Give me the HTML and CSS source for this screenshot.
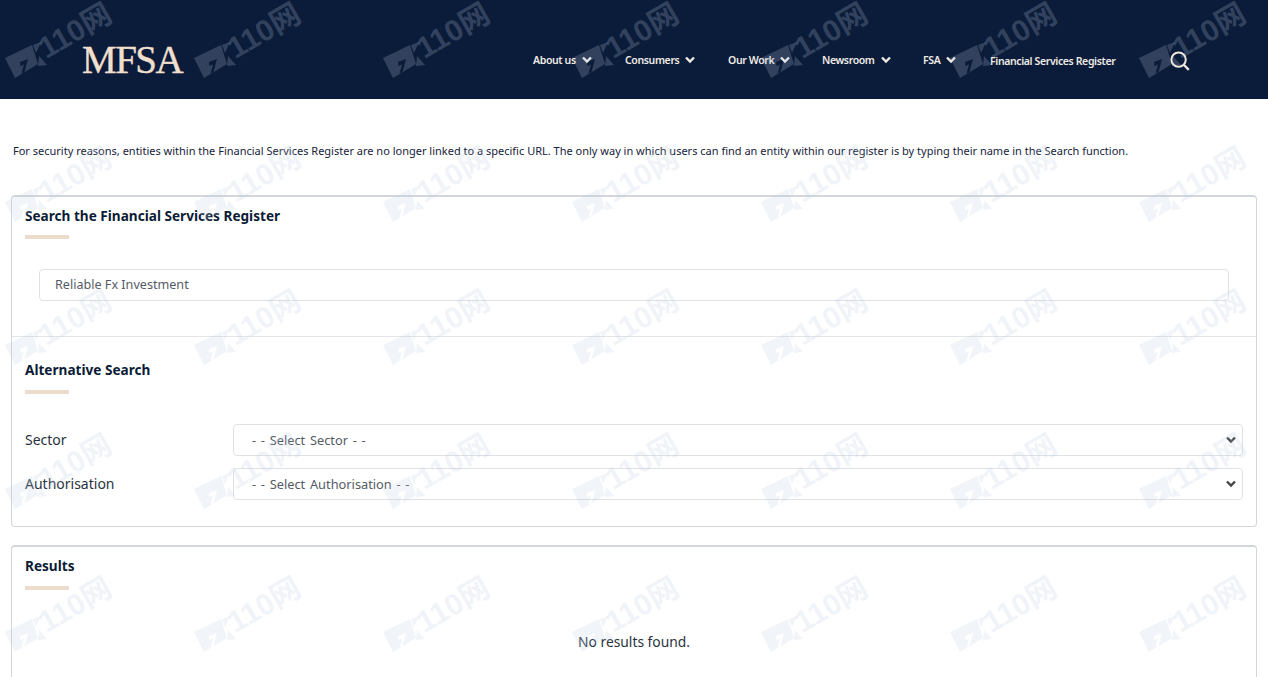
FILE: index.html
```html
<!DOCTYPE html>
<html lang="en">
<head>
<meta charset="utf-8">
<title>Financial Services Register</title>
<link rel="stylesheet" href="styles.css">
</head>
<body>
<svg class="defs" width="0" height="0" aria-hidden="true">
  <symbol id="chev" viewBox="0 0 10 8"><path d="M1 1.5 5 5.5 9 1.5" fill="none" stroke="currentColor" stroke-width="2.4"/></symbol>
</svg>
<header class="topbar">
  <div class="logo">MFSA</div>
  <nav class="nav">
    <a class="nav-item about">About us <svg class="chev"><use href="#chev"/></svg></a>
    <a class="nav-item consumers">Consumers <svg class="chev"><use href="#chev"/></svg></a>
    <a class="nav-item work">Our Work <svg class="chev"><use href="#chev"/></svg></a>
    <a class="nav-item news">Newsroom <svg class="chev"><use href="#chev"/></svg></a>
    <a class="nav-item fsa">FSA <svg class="chev"><use href="#chev"/></svg></a>
    <a class="nav-item register">Financial Services Register</a>
    <svg class="search" viewBox="0 0 20 20"><circle cx="8.6" cy="8.6" r="7.2" fill="none" stroke="currentColor" stroke-width="2"/><path d="M14 14 18.8 18.8" stroke="currentColor" stroke-width="2.4" fill="none"/></svg>
  </nav>
</header>
<main class="content">
  <p class="notice">For security reasons, entities within the Financial Services Register are no longer linked to a specific URL. The only way in which users can find an entity within our register is by typing their name in the Search function.</p>
  <section class="card">
    <div class="card-part first">
      <h2 class="title">Search the Financial Services Register</h2>
      <div class="rule"></div>
      <div class="input name-input">Reliable Fx Investment</div>
    </div>
    <div class="card-part second">
      <h2 class="title">Alternative Search</h2>
      <div class="rule"></div>
      <div class="field">
        <span class="label">Sector</span>
        <div class="input select">- - Select Sector - -<svg class="select-chev"><use href="#chev"/></svg></div>
      </div>
      <div class="field">
        <span class="label">Authorisation</span>
        <div class="input select">- - Select Authorisation - -<svg class="select-chev"><use href="#chev"/></svg></div>
      </div>
    </div>
  </section>
  <section class="card results">
    <h2 class="title">Results</h2>
    <div class="rule"></div>
    <p class="empty">No results found.</p>
  </section>
</main>
<div class="marks" id="marks"></div>
<script src="marks.js"></script>
</body>
</html>
```
FILE: marks.js
```js
var host = document.getElementById('marks');
var html = '';
for (var i = 0; i < 35; i++) {
  html += '<div class="mark"><svg class="mark-logo" viewBox="0 0 50 40"><path d="M5 18 32 5 38 24 15 38Z M20 22 28 19 24.5 32 21.5 33.5 24 24.5 20.5 26Z M33 5 41 2 36 13Z M39 16 47 25 38 26Z" fill="currentColor" fill-rule="evenodd"/></svg><span class="mark-text">110网</span></div>';
}
host.innerHTML = html;
```
FILE: styles.css
```css
* { box-sizing: border-box; }
html, body { margin: 0; padding: 0; }
body {
  position: relative;
  width: 1268px;
  height: 677px;
  overflow: hidden;
  background: #fff;
  color: #0b1c36;
  font-family: "Noto Sans", "Open Sans", sans-serif;
}
.defs { position: absolute; }
.topbar {
  height: 99px;
  background: #0b1c3a;
  display: flex;
  align-items: center;
  padding: 21px 0 0 82px;
}
.logo {
  font-family: "Liberation Serif", serif;
  font-size: 39px;
  line-height: 40px;
  color: #f0dfcd;
  width: 451px;
  letter-spacing: -1.5px;
  -webkit-text-stroke: 0.4px #f0dfcd;
}
.nav { display: flex; align-items: center; color: #efeae4; font-size: 10.5px; font-weight: 600; letter-spacing: -0.37px; }
.nav-item { display: flex; align-items: center; white-space: nowrap; }
.chev { width: 10px; height: 8px; margin-left: 6px; }
.about { width: 92px; }
.consumers { width: 103px; }
.work { width: 94px; }
.news { width: 101px; }
.fsa { width: 67px; }
.register { width: 180px; position: relative; top: 1px; }
.search { width: 20px; height: 20px; color: #f0e6da; position: relative; top: 1px; }
.content { padding: 0 11px; }
.notice { margin: 44px 0 37px 2px; font-size: 11px; line-height: 15px; color: #16233a; white-space: nowrap; }
.card {
  border: 1px solid #d3d6da;
  border-top-width: 2px;
  border-radius: 4px;
}
.first { padding: 10px 13px 35px; border-bottom: 1px solid #e3e5e8; }
.second { padding: 24px 13px 26px; }
.title { margin: 0; font-size: 13.6px; line-height: 18px; font-weight: 700; color: #0b1c36; }
.rule { width: 44px; height: 4px; margin-top: 10px; background: #ecdccb; }
.second .rule { margin-top: 11px; }
.input {
  height: 32px;
  border: 1px solid #dfe2e5;
  border-radius: 4px;
  font-size: 12.6px;
  line-height: 30px;
  color: #555b66;
}
.name-input { margin: 30px 14px 0; padding-left: 15px; }
.field { display: flex; align-items: center; height: 32px; margin-top: 12px; }
.second .rule + .field { margin-top: 30px; }
.label { width: 208px; padding-bottom: 2px; font-size: 14px; color: #2a3240; }
.select { flex: 1; display: flex; justify-content: space-between; align-items: center; padding: 0 6px 0 18px; font-size: 12.8px; word-spacing: 1.4px; }
.select-chev { width: 10px; height: 8px; color: #444; }
.results { margin-top: 18px; padding: 10px 13px; height: 132px; border-bottom: 0; border-radius: 4px 4px 0 0; }
.results .rule { margin-top: 11px; }
.empty { margin: 42px 0 0; text-align: center; font-size: 13.8px; color: #2a3240; }
.marks {
  position: absolute;
  left: 0;
  top: 0;
  width: 1323px;
  height: 677px;
  overflow: hidden;
  display: grid;
  grid-template-columns: repeat(7, 189px);
  grid-auto-rows: 143.5px;
  pointer-events: none;
}
.mark {
  position: relative;
  height: 90px;
  color: rgba(190, 205, 225, 0.22);
}
.mark-logo { position: absolute; left: 0; top: 40px; width: 50px; height: 40px; }
.mark-text {
  position: absolute;
  left: 36px;
  top: 11px;
  font-family: "Liberation Sans", "Noto Sans CJK SC", sans-serif;
  font-size: 30px;
  line-height: 40px;
  font-weight: 700;
  white-space: nowrap;
  transform: rotate(-30deg);
}
```
